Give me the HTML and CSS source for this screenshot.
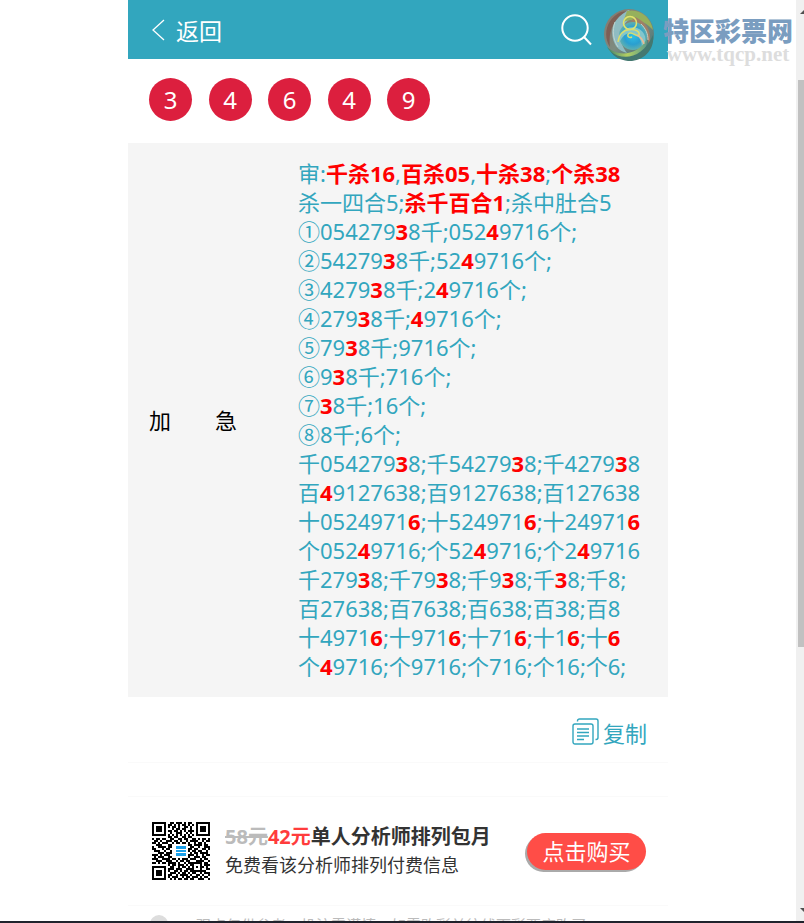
FILE: index.html
```
<!DOCTYPE html>
<html lang="zh-CN">
<head>
  <meta charset="UTF-8">
  <title>加急</title>
  <link rel="stylesheet" href="styles.css">
</head>
<body>
  <div class="screen">
    <div class="page">
      <header class="topbar">
        <a class="back" href="#">
          <svg width="13" height="22" viewBox="0 0 13 22"><path d="M12 1L1 11l11 10" fill="none" stroke="#fff" stroke-width="1.3"/></svg>
          返回
        </a>
        <button class="search" type="button" aria-label="搜索">
          <svg width="32" height="32" viewBox="0 0 32 32"><g fill="none" stroke="#fff" stroke-width="2"><circle cx="15" cy="14" r="12.7"/><path d="M24 23l7 7.500"/></g></svg>
        </button>
      </header>

      <div class="balls">
        <span>3</span><span>4</span><span>6</span><span>4</span><span>9</span>
      </div>

      <div class="detail">
        <div class="name">加　　急</div>
        <div class="content">
          审:<b>千杀16</b>,<b>百杀05</b>,<b>十杀38</b>;<b>个杀38</b><br>
          杀一四合5;<b>杀千百合1</b>;杀中肚合5<br>
          ①054279<b>3</b>8千;052<b>4</b>9716个;<br>
          ②54279<b>3</b>8千;52<b>4</b>9716个;<br>
          ③4279<b>3</b>8千;2<b>4</b>9716个;<br>
          ④279<b>3</b>8千;<b>4</b>9716个;<br>
          ⑤79<b>3</b>8千;9716个;<br>
          ⑥9<b>3</b>8千;716个;<br>
          ⑦<b>3</b>8千;16个;<br>
          ⑧8千;6个;<br>
          千054279<b>3</b>8;千54279<b>3</b>8;千4279<b>3</b>8<br>
          百<b>4</b>9127638;百9127638;百127638<br>
          十0524971<b>6</b>;十524971<b>6</b>;十24971<b>6</b><br>
          个052<b>4</b>9716;个52<b>4</b>9716;个2<b>4</b>9716<br>
          千279<b>3</b>8;千79<b>3</b>8;千9<b>3</b>8;千<b>3</b>8;千8;<br>
          百27638;百7638;百638;百38;百8<br>
          十4971<b>6</b>;十971<b>6</b>;十71<b>6</b>;十1<b>6</b>;十<b>6</b><br>
          个<b>4</b>9716;个9716;个716;个16;个6;
        </div>
      </div>

      <div class="copy-row">
        <button class="copy" type="button">
          <svg width="27" height="27" viewBox="0 0 27 27"><g fill="none" stroke="#32a6be" stroke-width="1.4"><rect x="1" y="6" width="20" height="20" rx="2"/><path d="M5.500 3.500V3a2 2 0 0 1 2-2H24a2 2 0 0 1 2 2v16.500a2 2 0 0 1-2 2h-.5M5 11h12M5 14.500h12M5 18h12M5 21.500h7"/></g></svg>
          复制
        </button>
      </div>

      <div class="offer">
        <svg class="qr" id="qr" width="58" height="58" viewBox="0 0 29 29" shape-rendering="crispEdges"></svg>
        <div class="offer-text">
          <p class="offer-title"><del>58元</del><em>42元</em>单人分析师排列包月</p>
          <p class="offer-sub">免费看该分析师排列付费信息</p>
        </div>
        <button class="buy" type="button">点击购买</button>
      </div>

      <div class="notice">
        <i class="dot"></i>
        <span>观点仅供参考，投注需谨慎，如需购彩前往线下彩票店购买</span>
      </div>
    </div>

    <div class="scrollbar">
      <svg class="arrow" width="8" height="6" viewBox="0 0 8 6"><path d="M4 5l4-4v4z" fill="#505050"/></svg>
      <div class="thumb"></div>
      <svg class="arrow" width="8" height="6" viewBox="0 0 8 6"><path d="M4 1l4 4V1z" fill="#505050"/></svg>
    </div>
  </div>
  <div class="taskbar"></div>

  <div class="watermark">
    <svg width="52" height="54" viewBox="0 0 52 54">
      <defs>
        <linearGradient id="rim" x1="0" y1="0" x2="1" y2="1">
          <stop offset="0" stop-color="#8c7468"/>
          <stop offset=".5" stop-color="#7d8b80"/>
          <stop offset="1" stop-color="#3f7378"/>
        </linearGradient>
        <linearGradient id="sweep" x1="0" y1="0" x2="1" y2="0">
          <stop offset="0" stop-color="#3d7f6c"/>
          <stop offset=".5" stop-color="#b3cf62"/>
          <stop offset="1" stop-color="#5c9c8a"/>
        </linearGradient>
        <radialGradient id="core">
          <stop offset="0" stop-color="#2fc0e6"/>
          <stop offset=".6" stop-color="#2a9fd0"/>
          <stop offset="1" stop-color="#5fb0b0"/>
        </radialGradient>
      </defs>
      <circle cx="26" cy="26" r="25" fill="url(#rim)"/>
      <path d="M26 2C10 7 5 24 13 38C16 42 20 44 24 45C15 34 15 17 30 9z" fill="#8fbcc2"/>
      <path d="M18 4C4 10-1 27 7 39C5 24 10 11 24 3z" fill="#7d5f55"/>
      <path d="M24 3C36 0 48 9 50 22C43 14 33 9 20 14z" fill="#96b05c"/>
      <path d="M32 9C44 14 50 25 46 38C45 27 40 18 28 13z" fill="#a08066"/>
      <ellipse cx="30" cy="28" rx="14" ry="14" fill="url(#core)"/>
      <path d="M16 36C15 24 24 17 34 20C43 23 45 33 39 42C40 33 35 25 27 25C21 26 18 30 16 36z" fill="#83c6cb"/>
      <path d="M4 39C15 49 34 48 44 31C45 42 35 51 24 51C15 50 8 46 4 39z" fill="url(#sweep)"/>
      <path d="M7 43C20 54 40 50 50 27C52 44 38 54 25 53C17 52 11 49 7 43z" fill="#447870"/>
      <path d="M12 14C9 23 10 31 15 39M38 16C43 21 45 26 45 32" fill="none" stroke="#bed3cf"/>
      <g fill="none" stroke-width="1.500">
        <circle cx="27" cy="15" r="6.500" stroke="#e3e56c"/>
        <path d="M15 34C16 27 20 22 27 21.500C33 21 37 24 36 27C34 30 30 24 27 25C23 26 25 31 29 29" stroke="#d9dd70"/>
        <path d="M34 27c4 2 6 5 7 9" stroke="#e9bd95"/>
      </g>
    </svg>
    <div class="brand">
      <strong>特区彩票网</strong>
      <small>www.tqcp.net</small>
    </div>
  </div>

  <script>
    const rows = [
      '11111110011011101011001111111',
      '10000010110101011010101000001',
      '10111010101101001101001011101',
      '10111010001011011001001011101',
      '10111010110110101011101011101',
      '10000010010011100101001000001',
      '11111110101010101010101111111',
      '00000000110110011011000000000',
      '10110110011001101100110101101',
      '01101001110110100101111001011',
      '11010111001011011010010110100',
      '00111000110000000011011110110',
      '10011110110000000001100100111',
      '11000101100000000011011001101',
      '01110010010000000010110110010',
      '00011101110000000001011011110',
      '11101011100000000011101001011',
      '01011100110000000010011101100',
      '11100111101101011101110010110',
      '00111001110010110110001111001',
      '11010110111101001011111110110',
      '00000000101101110101100010111',
      '11111110011001011010101011010',
      '10000010111011100111100010011',
      '10111010100110101101111111100',
      '10111010011101011010110010111',
      '10111010110010111101001101001',
      '10000010101110010110111010110',
      '11111110010101101101100111001'
    ];

    let d = '';
    rows.forEach((row, y) => {
      [...row].forEach((bit, x) => {
        if (bit === '1') d += `M${x} ${y}h1v1h-1z`;
      });
    });
    document.getElementById('qr').innerHTML =
      `<path d="${d}"/><path d="M12 12h5v1.500h-5zM12 14h5v1h-5zM12 15.500h5v1.500h-5z" fill="#1ba0ea"/>`;
  </script>
</body>
</html>
```
FILE: styles.css
```
* {
  box-sizing: border-box;
}

body {
  margin: 0;
  height: 100vh;
  display: flex;
  flex-direction: column;
  overflow: hidden;
  background: #fff;
  color: #000;
  font-family: "Noto Sans", "Noto Sans CJK SC", sans-serif;
  font-size: 22px;
}

button {
  padding: 0;
  border: none;
  background: none;
  font: inherit;
  cursor: pointer;
}

svg {
  display: block;
}

.screen {
  flex: 1;
  min-height: 0;
  display: flex;
  overflow: hidden;
}

.page {
  flex: 1;
  max-width: 540px;
  margin: 0 auto;
}

/* top bar */
.topbar {
  display: flex;
  align-items: center;
  justify-content: space-between;
  height: 59px;
  padding: 0 76px 0 24px;
  background: #32a6be;
}

.back {
  display: flex;
  align-items: center;
  gap: 11px;
  color: #fff;
  font-size: 23px;
  text-decoration: none;
}

/* winning numbers */
.balls {
  display: flex;
  justify-content: space-between;
  width: 323px;
  padding: 19px 21px 22px;
}

.balls span {
  width: 43px;
  height: 43px;
  border-radius: 50%;
  background: #dc1f3e;
  color: #fff;
  font-size: 24px;
  line-height: 43px;
  text-align: center;
}

/* prediction */
.detail {
  display: grid;
  grid-template-columns: 149px 1fr;
  align-items: center;
  padding: 16px 0 16px 21px;
  background: #f5f5f5;
  line-height: 29px;
}

.content {
  color: #32a6be;
  white-space: nowrap;
}

.content b {
  color: #f00;
}

.copy-row {
  display: flex;
  justify-content: flex-end;
  height: 66px;
  padding: 4px 21px 0 0;
  border-bottom: 1px solid #fafafa;
}

.copy {
  display: flex;
  align-items: center;
  gap: 4px;
  color: #32a6be;
}

/* monthly offer */
.offer {
  display: flex;
  align-items: center;
  height: 110px;
  margin-top: 33px;
  padding: 0 22px 0 24px;
  border-top: 1px solid #fafafa;
  border-bottom: 1px solid #fafafa;
}

.offer-text {
  flex: 1;
  margin-left: 15px;
  color: #333;
  line-height: 29px;
  white-space: nowrap;
}

.offer-text p {
  margin: 0;
}

.offer-title {
  font-size: 20px;
  font-weight: bold;
}

.offer-title del {
  color: #bbb;
}

.offer-title em {
  color: #ff3c3c;
  font-style: normal;
}

.offer-sub {
  font-size: 18px;
}

.buy {
  width: 119px;
  height: 37px;
  border-radius: 19px;
  background: #ff4d47;
  box-shadow: -2px 2px 0 #aaa;
  color: #fff;
  line-height: 37px;
}

.notice {
  display: flex;
  align-items: flex-start;
  gap: 28px;
  padding: 9px 22px;
  color: #bbb;
  font-size: 15px;
  line-height: 20px;
}

.dot {
  width: 18px;
  height: 18px;
  border-radius: 50%;
  background: #ddd;
}

/* scrollbar and bottom edge */
.scrollbar {
  display: flex;
  flex-direction: column;
  width: 8px;
  padding: 9px 0 8px;
  background: #f0f0f0;
}

.thumb {
  height: 567px;
  margin: 65px 0 auto 2px;
  background: #c1c1c1;
}

.taskbar {
  height: 2px;
  background: #20222c;
}

/* site watermark over the page */
.watermark {
  position: absolute;
  top: 8px;
  right: 11px;
  display: flex;
  gap: 8px;
}

.brand {
  display: flex;
  flex-direction: column;
  padding-top: 7px;
}

.brand strong {
  color: #7a9dc0;
  font-family: "Noto Sans CJK SC", sans-serif;
  font-size: 26px;
  font-weight: 900;
  line-height: 29px;
}

.brand small {
  color: #ddd;
  font-family: "Liberation Serif", serif;
  font-size: 21px;
  font-weight: bold;
  line-height: 20px;
  text-align: center;
}
```
